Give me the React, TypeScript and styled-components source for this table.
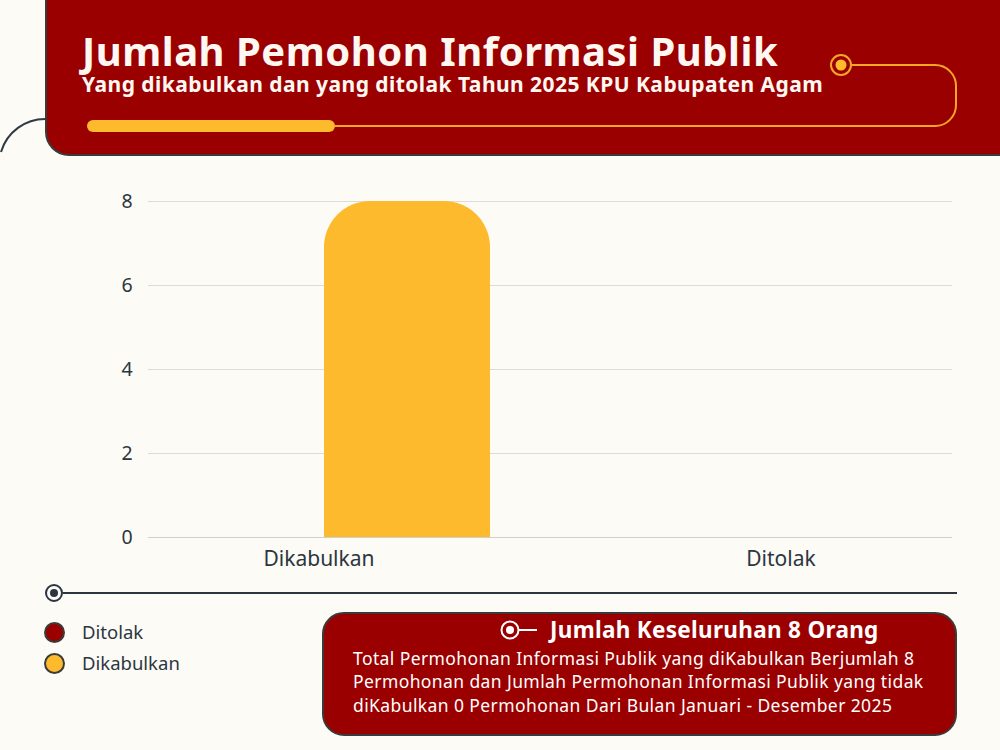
import React from "react";
import styled, { createGlobalStyle } from "styled-components";

const GlobalStyle = createGlobalStyle`
  html, body {
    margin: 0;
    padding: 0;
    background: #fdfbf6;
  }
  body {
    width: 1000px;
    height: 750px;
    overflow: hidden;
    font-family: "Noto Sans", "Open Sans", sans-serif;
  }
`;

const RED = "#9b0000";
const YELLOW = "#fdba2c";
const INK = "#2b3640";

const Page = styled.div`
  position: relative;
  width: 1000px;
  height: 750px;
  background: #fdfbf6;
  overflow: hidden;
`;

const CornerArc = styled.svg`
  position: absolute;
  left: 0;
  top: 110px;
`;

const Header = styled.header`
  margin-left: 45px;
  height: 156px;
  box-sizing: border-box;
  background: ${RED};
  border-left: 2px solid #3a3a3a;
  border-bottom: 2px solid #3a3a3a;
  border-bottom-left-radius: 24px;
  padding: 29px 0 0 35px;
  position: relative;
`;

const Title = styled.h1`
  margin: 0;
  color: #fff8f2;
  font-family: "Noto Sans", sans-serif;
  font-weight: 700;
  font-size: 40px;
  line-height: 44px;
  letter-spacing: 0.5px;
`;

const Subtitle = styled.h2`
  margin: 0;
  color: #fff8f2;
  font-family: "Noto Sans", sans-serif;
  font-weight: 700;
  font-size: 21px;
  line-height: 22px;
  letter-spacing: 0.45px;
`;

const Track = styled.svg`
  position: absolute;
  left: 40px;
  top: 50px;
`;

const ChartRow = styled.section`
  display: flex;
  align-items: flex-start;
  margin-top: 45px;
`;

const YAxis = styled.div`
  width: 38px;
  margin: -11px 0 -11px 108px;
  height: 358px;
  display: flex;
  flex-direction: column;
  justify-content: space-between;
`;

const Tick = styled.span`
  height: 22px;
  line-height: 22px;
  text-align: center;
  font-size: 19.5px;
  color: ${INK};
`;

const Plot = styled.div`
  width: 804px;
  margin-left: 2px;
  height: 336px;
  display: flex;
  align-items: flex-end;
  border-bottom: 1px solid #cfcfcf;
  background-image: linear-gradient(#dedbd6 1px, transparent 1px);
  background-size: 100% 84px;
`;

const Bar = styled.div<{ $offset: number; $color: string }>`
  width: 166px;
  margin-left: ${(p) => p.$offset}px;
  background: ${(p) => p.$color};
  border-radius: 46px 46px 0 0;
`;

const XLabels = styled.div`
  display: grid;
  grid-template-columns: 200px 262px 200px;
  padding-left: 219px;
  margin-top: 7px;
`;

const XLabel = styled.span`
  text-align: center;
  font-size: 21px;
  line-height: 26px;
  color: ${INK};
`;

const Divider = styled.div`
  display: flex;
  align-items: center;
  margin: 13px 0 0 45px;
  width: 912px;
`;

const Knob = styled.span`
  width: 18px;
  height: 18px;
  box-sizing: border-box;
  border: 2px solid ${INK};
  border-radius: 50%;
  background: #fdfbf6;
  display: flex;
  align-items: center;
  justify-content: center;
  &::after {
    content: "";
    width: 8px;
    height: 8px;
    border-radius: 50%;
    background: ${INK};
  }
`;

const Rule = styled.span`
  flex: 1;
  height: 2px;
  background: ${INK};
`;

const Bottom = styled.section`
  display: flex;
  align-items: flex-start;
  margin-top: 10px;
`;

const Legend = styled.ul`
  list-style: none;
  margin: 9px 0 0 44px;
  padding: 0;
  width: 278px;
  display: flex;
  flex-direction: column;
  gap: 9px;
`;

const LegendItem = styled.li`
  display: flex;
  align-items: center;
  gap: 17px;
  font-size: 18.5px;
  line-height: 22px;
  color: ${INK};
`;

const Dot = styled.span<{ $color: string }>`
  width: 21px;
  height: 21px;
  box-sizing: border-box;
  border-radius: 50%;
  border: 2px solid #3a3a3a;
  background: ${(p) => p.$color};
`;

const Card = styled.div`
  width: 635px;
  height: 124px;
  box-sizing: border-box;
  background: ${RED};
  border: 2px solid #3a3a3a;
  border-radius: 22px;
  padding: 2px 16px 0 29px;
  color: #fff;
`;

const CardHead = styled.div`
  display: flex;
  align-items: center;
  gap: 12px;
  padding-left: 147px;
  font-family: "Noto Sans", sans-serif;
  font-weight: 700;
  font-size: 22.5px;
  line-height: 28px;
  letter-spacing: 0.3px;
`;

const CardBody = styled.p`
  margin: 3px 0 0;
  font-family: "Noto Sans", sans-serif;
  font-size: 17.5px;
  line-height: 23.4px;
  letter-spacing: 0.4px;
`;

const chartData = [
  { label: "Dikabulkan", value: 8, color: YELLOW },
  { label: "Ditolak", value: 0, color: RED },
];
const MAX = 8;

export default function App() {
  return (
    <Page>
      <GlobalStyle />
      <CornerArc width="50" height="50" viewBox="0 0 50 50">
        <path d="M1 42 A46 46 0 0 1 46 9" fill="none" stroke="#2f3a44" strokeWidth="2" />
      </CornerArc>
      <Header>
        <Title>Jumlah Pemohon Informasi Publik</Title>
        <Subtitle>Yang dikabulkan dan yang ditolak Tahun 2025 KPU Kabupaten Agam</Subtitle>
        <Track width="880" height="90" viewBox="0 0 880 90">
          <path
            d="M248 76 H848 A21 21 0 0 0 869 55 V36 A21 21 0 0 0 848 15 H763"
            fill="none"
            stroke="#f5a623"
            strokeWidth="2"
          />
          <line x1="6" y1="76" x2="242" y2="76" stroke={YELLOW} strokeWidth="12" strokeLinecap="round" />
          <circle cx="754" cy="15" r="10" fill={RED} stroke="#f5a623" strokeWidth="2" />
          <circle cx="754" cy="15" r="5.5" fill={YELLOW} />
        </Track>
      </Header>

      <ChartRow>
        <YAxis>
          {[8, 6, 4, 2, 0].map((t) => (
            <Tick key={t}>{t}</Tick>
          ))}
        </YAxis>
        <Plot>
          <Bar
            $offset={176}
            $color={chartData[0].color}
            style={{ height: `${(chartData[0].value / MAX) * 100}%` }}
          />
        </Plot>
      </ChartRow>
      <XLabels>
        <XLabel>Dikabulkan</XLabel>
        <span />
        <XLabel>Ditolak</XLabel>
      </XLabels>

      <Divider>
        <Knob />
        <Rule />
      </Divider>

      <Bottom>
        <Legend>
          <LegendItem>
            <Dot $color={RED} />
            Ditolak
          </LegendItem>
          <LegendItem>
            <Dot $color={YELLOW} />
            Dikabulkan
          </LegendItem>
        </Legend>
        <Card>
          <CardHead>
            <svg width="38" height="22" viewBox="0 0 38 22">
              <circle cx="10" cy="11" r="8.5" fill="none" stroke="#fff" strokeWidth="2" />
              <circle cx="10" cy="11" r="4" fill="#fff" />
              <line x1="19" y1="11" x2="37" y2="11" stroke="#fff" strokeWidth="2" />
            </svg>
            Jumlah Keseluruhan 8 Orang
          </CardHead>
          <CardBody>
            Total Permohonan Informasi Publik yang diKabulkan Berjumlah 8 Permohonan dan Jumlah
            Permohonan Informasi Publik yang tidak diKabulkan 0 Permohonan Dari Bulan Januari -
            Desember 2025
          </CardBody>
        </Card>
      </Bottom>
    </Page>
  );
}
